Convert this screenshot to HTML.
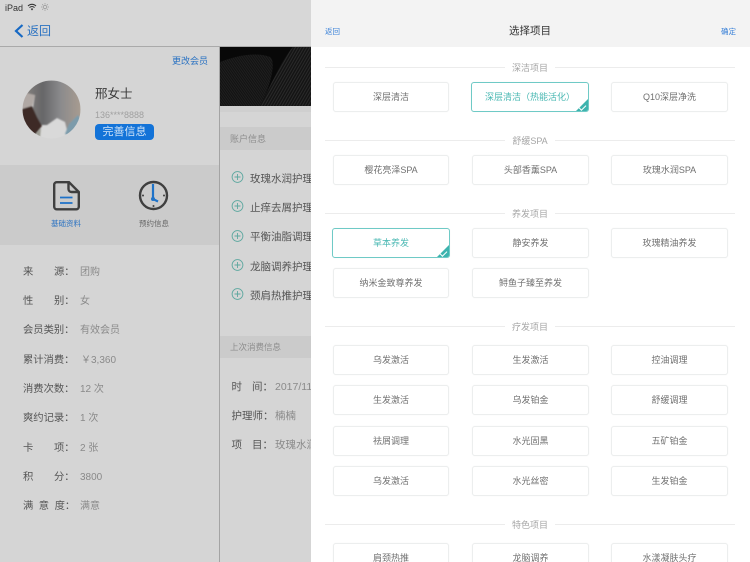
<!DOCTYPE html>
<html><head><meta charset="utf-8">
<style>
*{margin:0;padding:0;box-sizing:border-box}
html,body{width:750px;height:562px;overflow:hidden;background:#d5d5d5}
body{position:relative;font-family:"Liberation Sans","Noto Sans CJK SC",sans-serif}
.a{position:absolute;white-space:nowrap;line-height:14px}
.k{left:23px;font-size:10.300px;color:#555}
.v{left:80px;font-size:10px;color:#8a8a8a}
.p{left:250px;width:61px;overflow:hidden;font-size:10.500px;color:#555}
.l{left:231.500px;font-size:10.500px;color:#555}
.m{left:275px;width:36px;overflow:hidden;font-size:10.500px;color:#8a8a8a}
.c{position:absolute;width:116px;height:30px;border:1px solid #eceeee;border-radius:3px;background:#fff;font-size:9px;line-height:29px;text-align:center;color:#707070;box-shadow:0 0 1px #eee}
.c.s{border:1px solid #6fcac6;color:#4ab8b3;overflow:hidden}
.c.s:after{content:"";position:absolute;right:0;bottom:0;border-style:solid;border-width:0 0 12px 12px;border-color:transparent transparent #3db3ae transparent}
.c.s:before{content:"";position:absolute;z-index:2;right:2px;bottom:2.500px;width:6px;height:3px;border-left:1.300px solid #fff;border-bottom:1.300px solid #fff;transform:rotate(-45deg)}
.t{position:absolute;left:325px;width:410px;height:1px;background:#ececec}
.tt{position:absolute;left:505px;width:50px;text-align:center;background:#fff;font-size:9px;line-height:12px;color:#a5a5a5}
.g{margin-left:20.700px}
.h{margin-left:5.500px}
.n{margin-left:10px}
</style></head><body>
<div class="a" style="left:0;top:0;width:311px;height:46px;background:#d7d7d7"></div>
<div class="a" style="left:0;top:46px;width:311px;height:1px;background:#aaa"></div>
<div class="a" style="left:5px;top:1px;font-size:9px;color:#333">iPad</div>
<svg class="a" style="left:27px;top:3px" width="10" height="8" viewBox="0 0 10 8"><path d="M1 3a5.500 5.500 0 0 1 8 0M2.500 4.600a3.400 3.400 0 0 1 5 0" fill="none" stroke="#333" stroke-width="1.100"/><path d="M5 7.500 3.800 6a1.700 1.700 0 0 1 2.400 0z" fill="#333"/></svg>
<svg class="a" style="left:41px;top:3px" width="8" height="8" viewBox="0 0 8 8"><circle cx="4" cy="4" r="1.600" fill="none" stroke="#999" stroke-width=".7"/><path d="M4 0v1.500M4 6.500V8M0 4h1.500M6.500 4H8M1.200 1.200l1 1M5.800 5.800l1 1M1.200 6.800l1-1M5.800 2.200l1-1" stroke="#999" stroke-width=".7"/></svg>
<svg class="a" style="left:14px;top:24px" width="10" height="14" viewBox="0 0 10 14"><path d="M8.500 1 2 7l6.500 6" fill="none" stroke="#1769c4" stroke-width="2.200"/></svg>
<div class="a" style="left:27px;top:23px;font-size:12px;line-height:16px;color:#2a72c2">返回</div>

<div class="a" style="left:172px;top:54px;font-size:9px;color:#2a72c2">更改会员</div>
<svg class="a" style="left:22px;top:80px" width="59" height="59" viewBox="0 0 59 59">
<defs><clipPath id="av"><circle cx="29.500" cy="29.500" r="29"/></clipPath><linearGradient id="h" x1="0" y1="0" x2="1" y2="0"><stop offset="0" stop-color="#8b8683"/><stop offset=".35" stop-color="#666668"/><stop offset=".65" stop-color="#8a8a8c"/><stop offset="1" stop-color="#a89c90"/></linearGradient><filter id="b" x="-10%" y="-10%" width="120%" height="120%"><feGaussianBlur stdDeviation=".7"/></filter></defs>
<g clip-path="url(#av)"><rect width="59" height="59" fill="#d9d9d9"/>
<g filter="url(#b)">
<path d="M0 0h59v36L46 54 43 42 35 38 25 45 16 45 11 28 13 15 2 22 0 30z" fill="url(#h)"/>
<path d="M0 12 13 15 11 24 9 29 3 30 0 28z" fill="#b0a8a4"/>
<path d="M0 29 10 26 15 37 20 46 12 56 0 50z" fill="#3e2b26"/>
<path d="M43 54 47 44 56 35 59 40 52 59z" fill="#7c9bab"/>
<path d="M14 54 19 48 18 58z" fill="#9a9a90"/>
</g></g></svg>
<div class="a" style="left:95px;top:86px;font-size:12.500px;line-height:16px;color:#3a3a3a">邢女士</div>
<div class="a" style="left:95px;top:108px;font-size:9px;color:#a0a0a0">136****8888</div>
<div class="a" style="left:95px;top:124px;width:59px;height:16px;border-radius:4px;background:#1373d8;color:#cfe3f7;font-size:11px;line-height:16px;text-align:center">完善信息</div>

<div class="a" style="left:0;top:165px;width:219px;height:80px;background:#cbcbcb"></div>
<svg class="a" style="left:53px;top:181px" width="27" height="30" viewBox="0 0 27 30"><path d="M3.700 1.200H16L25.800 11V25.800a2.500 2.500 0 0 1-2.500 2.500H3.700a2.500 2.500 0 0 1-2.500-2.500V3.700a2.500 2.500 0 0 1 2.500-2.500z" fill="none" stroke="#3f3f3f" stroke-width="2.400"/><path d="M15.500 2v6a3 3 0 0 0 3 3H25" fill="none" stroke="#3f3f3f" stroke-width="2.400"/><path d="M7 16.500h12.500M7 22h12.500" stroke="#1e72c8" stroke-width="1.700"/></svg>
<div class="a" style="left:51px;top:217px;font-size:7.500px;color:#2a72c2">基础资料</div>
<svg class="a" style="left:138px;top:180px" width="31" height="31" viewBox="0 0 31 31"><circle cx="15.500" cy="15.500" r="13.500" fill="none" stroke="#3f3f3f" stroke-width="2.400"/><path d="M15 4v15l5 2.500" fill="none" stroke="#1e72c8" stroke-width="2.200"/><circle cx="15" cy="19" r="2" fill="#1e72c8"/><circle cx="15.500" cy="26" r="1" fill="#3f3f3f"/><circle cx="5" cy="15.500" r="1" fill="#3f3f3f"/><circle cx="26" cy="15.500" r="1" fill="#3f3f3f"/></svg>
<div class="a" style="left:139px;top:217px;font-size:7.500px;color:#666">预约信息</div>

<div class="a k" style="top:266px">来<span class="g">源：</span></div><div class="a v" style="top:266px">团购</div>
<div class="a k" style="top:295px">性<span class="g">别：</span></div><div class="a v" style="top:295px">女</div>
<div class="a k" style="top:324px">会员类别：</div><div class="a v" style="top:324px">有效会员</div>
<div class="a k" style="top:354px">累计消费：</div><div class="a v" style="top:354px;left:81px">￥3,360</div>
<div class="a k" style="top:383px">消费次数：</div><div class="a v" style="top:383px">12 次</div>
<div class="a k" style="top:412px">爽约记录：</div><div class="a v" style="top:412px">1 次</div>
<div class="a k" style="top:442px">卡<span class="g">项：</span></div><div class="a v" style="top:442px">2 张</div>
<div class="a k" style="top:471px">积<span class="g">分：</span></div><div class="a v" style="top:471px">3800</div>
<div class="a k" style="top:500px">满<span class="h">意</span><span class="h">度：</span></div><div class="a v" style="top:500px">满意</div>

<div class="a" style="left:219px;top:47px;width:1px;height:515px;background:#a4a4a4"></div>
<svg class="a" style="left:220px;top:47px" width="91" height="59" viewBox="0 0 91 59"><defs><pattern id="st" width="2.500" height="2.500" patternUnits="userSpaceOnUse" patternTransform="rotate(30)"><rect width="2.500" height="2.500" fill="#141414"/><rect width="1" height="2.500" fill="#2a2a2a"/></pattern><pattern id="st2" width="2" height="2" patternUnits="userSpaceOnUse" patternTransform="rotate(-35)"><rect width="2" height="2" fill="#121212"/><rect width="1" height="2" fill="#1f1f1f"/></pattern></defs><rect width="91" height="59" fill="#080808"/><path d="M0 15C18 8 38 5 50 10 56 14 52 36 40 59H0z" fill="url(#st2)"/><path d="M91 0v59H40C50 40 62 12 73 0z" fill="url(#st)"/></svg>
<div class="a" style="left:220px;top:106px;width:91px;height:6px;background:#cfcfcf"></div>
<div class="a" style="left:220px;top:127px;width:91px;height:23px;background:#cbcbcb"></div>
<div class="a" style="left:230px;top:132px;font-size:9px;color:#8d8d8d">账户信息</div>
<svg class="a" style="left:231px;top:170px" width="13" height="132" viewBox="0 0 13 132" fill="none" stroke="#5fa8a0" stroke-width=".9">
<g><circle cx="6.500" cy="7" r="5.400"/><path d="M3.500 7h6M6.500 4v6"/></g>
<g transform="translate(0 29)"><circle cx="6.500" cy="7" r="5.400"/><path d="M3.500 7h6M6.500 4v6"/></g>
<g transform="translate(0 59)"><circle cx="6.500" cy="7" r="5.400"/><path d="M3.500 7h6M6.500 4v6"/></g>
<g transform="translate(0 88)"><circle cx="6.500" cy="7" r="5.400"/><path d="M3.500 7h6M6.500 4v6"/></g>
<g transform="translate(0 117)"><circle cx="6.500" cy="7" r="5.400"/><path d="M3.500 7h6M6.500 4v6"/></g>
</svg>
<div class="a p" style="top:172px">玫瑰水润护理</div>
<div class="a p" style="top:201px">止痒去屑护理</div>
<div class="a p" style="top:230px">平衡油脂调理</div>
<div class="a p" style="top:260px">龙脑调养护理</div>
<div class="a p" style="top:289px">颈肩热推护理</div>
<div class="a" style="left:220px;top:336px;width:91px;height:22px;background:#cbcbcb"></div>
<div class="a" style="left:230px;top:340px;font-size:8.500px;color:#8d8d8d">上次消费信息</div>
<div class="a l" style="top:380px">时<span class="n">间：</span></div><div class="a m" style="top:380px">2017/11/12</div>
<div class="a l" style="top:409px">护理师：</div><div class="a m" style="top:409px">楠楠</div>
<div class="a l" style="top:438px">项<span class="n">目：</span></div><div class="a m" style="top:438px">玫瑰水润护理</div>

<div class="a" style="left:311px;top:0;width:439px;height:562px;background:#fff"></div>
<div class="a" style="left:311px;top:0;width:439px;height:47px;background:#f3f3f3"></div>
<div class="a" style="left:325px;top:25px;font-size:7.500px;color:#3b82d8">返回</div>
<div class="a" style="left:509px;top:24px;font-size:10.500px;color:#333">选择项目</div>
<div class="a" style="left:721px;top:25px;font-size:7.500px;color:#3b82d8">确定</div>

<div class="t" style="top:67px"></div><div class="tt" style="top:62px">深洁项目</div>
<div class="c" style="left:333px;top:82px">深层清洁</div>
<div class="c s" style="left:471px;top:82px;width:118px">深层清洁（热能活化）</div>
<div class="c" style="left:611px;top:82px;width:117px">Q10深层净洗</div>

<div class="t" style="top:140px"></div><div class="tt" style="top:135px">舒缓SPA</div>
<div class="c" style="left:333px;top:155px">樱花亮泽SPA</div>
<div class="c" style="left:472px;top:155px;width:117px">头部香薰SPA</div>
<div class="c" style="left:611px;top:155px;width:117px">玫瑰水润SPA</div>

<div class="t" style="top:213px"></div><div class="tt" style="top:208px">养发项目</div>
<div class="c s" style="left:332px;top:228px;width:118px">草本养发</div>
<div class="c" style="left:472px;top:228px;width:117px">静安养发</div>
<div class="c" style="left:611px;top:228px;width:117px">玫瑰精油养发</div>
<div class="c" style="left:333px;top:268px">纳米金致尊养发</div>
<div class="c" style="left:472px;top:268px;width:117px">鲟鱼子臻至养发</div>

<div class="t" style="top:326px"></div><div class="tt" style="top:321px">疗发项目</div>
<div class="c" style="left:333px;top:345px">乌发激活</div>
<div class="c" style="left:472px;top:345px;width:117px">生发激活</div>
<div class="c" style="left:611px;top:345px;width:117px">控油调理</div>
<div class="c" style="left:333px;top:385px">生发激活</div>
<div class="c" style="left:472px;top:385px;width:117px">乌发铂金</div>
<div class="c" style="left:611px;top:385px;width:117px">舒缓调理</div>
<div class="c" style="left:333px;top:426px">祛屑调理</div>
<div class="c" style="left:472px;top:426px;width:117px">水光固黑</div>
<div class="c" style="left:611px;top:426px;width:117px">五矿铂金</div>
<div class="c" style="left:333px;top:466px">乌发激活</div>
<div class="c" style="left:472px;top:466px;width:117px">水光丝密</div>
<div class="c" style="left:611px;top:466px;width:117px">生发铂金</div>

<div class="t" style="top:524px"></div><div class="tt" style="top:519px">特色项目</div>
<div class="c" style="left:333px;top:543px">肩颈热推</div>
<div class="c" style="left:472px;top:543px;width:117px">龙脑调养</div>
<div class="c" style="left:611px;top:543px;width:117px">水漾凝肤头疗</div>
</body></html>
